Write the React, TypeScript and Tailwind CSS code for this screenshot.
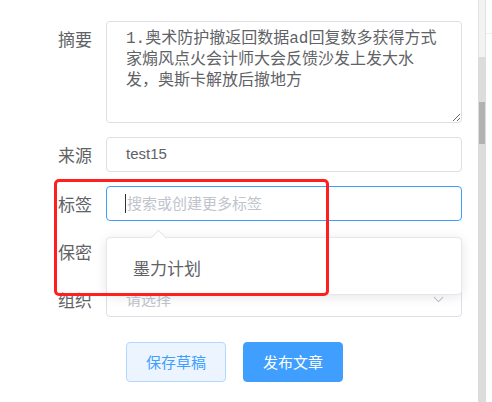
import { ChevronDown } from "lucide-react";

const labelCls =
  "w-[106px] shrink-0 pr-[14px] text-right text-[17px] leading-[35px] text-[#606266]";

const summary =
  "1.奥术防护撤返回数据ad回复数多获得方式家煽风点火会计师大会反馈沙发上发大水发，奥斯卡解放后撤地方";

export default function App() {
  return (
    <div
      className="flex h-[402px] w-[492px] overflow-hidden bg-white"
      style={{ fontFamily: '"Noto Sans CJK SC", "Liberation Sans", sans-serif' }}
    >
      <div className="relative w-[478px] shrink-0 pt-[21px]">
        {/* 摘要 */}
        <div className="flex">
          <label className={labelCls}>摘要</label>
          <textarea
            readOnly
            value={summary}
            className="h-[102px] w-[356px] rounded-[4px] border border-[#dcdfe6] px-[19px] pt-[7px] text-[16px] leading-[21px] text-[#606266] outline-none"
            style={{ fontFamily: '"Liberation Mono", "Noto Sans CJK SC", monospace' }}
          />
        </div>

        {/* 来源 */}
        <div className="mt-[14px] flex">
          <label className={labelCls}>来源</label>
          <div className="flex h-[35px] w-[356px] items-center rounded-[4px] border border-[#dcdfe6] px-[19px] text-[15px] text-[#606266]">
            <span style={{ fontFamily: '"Liberation Sans", "Noto Sans CJK SC", sans-serif' }}>
              test15
            </span>
          </div>
        </div>

        {/* 标签 */}
        <div className="mt-[14px] flex">
          <label className={labelCls}>标签</label>
          <div className="relative flex h-[35px] w-[356px] items-center rounded-[4px] border border-[#409eff] pl-[20px] text-[15px] text-[#c0c4cc]">
            <span className="absolute left-[18px] top-[7px] h-[19px] w-px bg-[#303133]" />
            搜索或创建更多标签
          </div>
        </div>

        {/* 保密 */}
        <div className="mt-[13px] flex">
          <label className={labelCls}>保密</label>
          <div className="h-[35px] w-[356px]" />
        </div>

        {/* 组织 */}
        <div className="mt-[13px] flex">
          <label className={labelCls}>组织</label>
          <div className="flex h-[35px] w-[356px] items-center justify-between rounded-[4px] border border-[#dcdfe6] pl-[19px] pr-[14px] text-[15px] text-[#c0c4cc]">
            <span>请选择</span>
            <ChevronDown size={17} strokeWidth={1.5} className="text-[#c0c4cc]" />
          </div>
        </div>

        {/* buttons */}
        <div className="ml-[126px] mt-[25px] flex gap-[17px]">
          <button className="h-[40px] w-[100px] rounded-[4px] border border-[#b3d8ff] bg-[#ecf5ff] text-[15px] text-[#409eff]">
            保存草稿
          </button>
          <button className="h-[40px] w-[100px] rounded-[4px] border border-[#409eff] bg-[#409eff] text-[15px] text-white">
            发布文章
          </button>
        </div>

        {/* tag dropdown */}
        <div className="absolute left-[106px] top-[237px] h-[58px] w-[356px] rounded-[4px] border border-[#e4e7ed] bg-white shadow-[0_2px_12px_rgba(0,0,0,0.1)]">
          <div className="absolute -top-[6px] left-[46px] h-[11px] w-[11px] rotate-45 border-l border-t border-[#e4e7ed] bg-white" />
          <div className="pl-[26px] pt-[12px] text-[17px] leading-[36px] text-[#606266]">
            墨力计划
          </div>
        </div>

        {/* annotation box */}
        <div className="absolute left-[54px] top-[179px] h-[117px] w-[275px] rounded-[5px] border-[3px] border-[#ff1f1f]" />
      </div>

      {/* scrollbar */}
      <div className="flex w-[8px] shrink-0 flex-col">
        <div className="h-[57px] border-x border-[#e2e2e2] bg-[#f3f3f3]" />
        <div className="flex-1 bg-[#dcdcdc] pt-[45px]">
          <div className="mx-auto h-[42px] w-[6px] bg-[#b2b2b2]" />
        </div>
      </div>

      <div className="w-[6px] shrink-0 pt-[33px]">
        <div className="h-px bg-[#eeeeee]" />
      </div>
    </div>
  );
}
